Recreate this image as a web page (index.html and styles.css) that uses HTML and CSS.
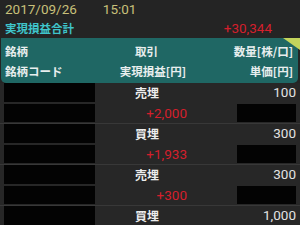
FILE: index.html
```html
<!DOCTYPE html>
<html lang="ja">
<head>
<meta charset="utf-8">
<link rel="stylesheet" href="styles.css">
</head>
<body>
<div class="top">
  <div class="dateline"><span>2017/09/26</span><span class="time">15:01</span></div>
  <div class="sumline"><span class="sumlabel">実現損益合計</span><span class="plus total">+30,344</span></div>
</div>
<div class="head">
  <div class="hrow">
    <span>銘柄</span><span class="trade">取引</span><span class="right">数量[株/口]</span>
  </div>
  <div class="hrow">
    <span>銘柄コード</span><span class="pl">実現損益[円]</span><span class="right">単価[円]</span>
  </div>
</div>
<div class="rec">
  <div class="mask"></div><span class="trade">売埋</span><span class="num right">100</span>
  <div class="mask"></div><span class="plus pl">+2,000</span><div class="mask rmask"></div>
</div>
<div class="rec">
  <div class="mask"></div><span class="trade">買埋</span><span class="num right">300</span>
  <div class="mask"></div><span class="plus pl">+1,933</span><div class="mask rmask"></div>
</div>
<div class="rec">
  <div class="mask"></div><span class="trade">売埋</span><span class="num right">300</span>
  <div class="mask"></div><span class="plus pl">+300</span><div class="mask rmask"></div>
</div>
<div class="rec">
  <div class="mask"></div><span class="trade">買埋</span><span class="num right">1,000</span>
  <div class="mask"></div><span class="plus pl"></span><div class="mask rmask"></div>
</div>
</body>
</html>
```
FILE: styles.css
```css
html, body {
  margin: 0;
  padding: 0;
}
body {
  width: 300px;
  height: 225px;
  overflow: hidden;
  background: #242424;
  font-family: "Roboto", "Noto Sans CJK JP", sans-serif;
  color: #e6e6e6;
}
.top {
  padding: 0 5px;
}
.dateline {
  display: flex;
  height: 18px;
  align-items: center;
  font-size: 13.5px;
  color: #c8c07a;
}
.time {
  margin-left: 26px;
}
.sumline {
  display: flex;
  justify-content: space-between;
  align-items: center;
  height: 20px;
  padding-right: 23px;
}
.sumlabel {
  font-family: "Noto Sans CJK JP", sans-serif;
  font-weight: bold;
  font-size: 11.5px;
  color: #3fc4cb;
}
.plus {
  color: #d41f2c;
  font-size: 13.5px;
}
.head {
  position: relative;
  margin: 0 2px 0 1px;
  padding: 3px 0 2px;
  background: #1f6764;
  border-radius: 0 0 5px 5px;
  font-family: "Noto Sans CJK JP", sans-serif;
  font-weight: bold;
  font-size: 11.5px;
  color: #e8eeee;
}
.head::after {
  content: "";
  position: absolute;
  top: 0;
  right: -2px;
  width: 17px;
  height: 12px;
  background: #c4d55c;
  clip-path: polygon(0 0, 100% 0, 100% 100%);
}
.hrow {
  display: grid;
  grid-template-columns: 90px 95px 1fr;
  height: 20px;
  align-items: center;
  padding: 0 5px 0 4px;
}
.trade {
  padding-left: 40px;
}
.pl {
  text-align: right;
  padding-right: 4px;
}
.right {
  text-align: right;
}
.rec {
  display: grid;
  grid-template-columns: 91px 95px 1fr;
  grid-template-rows: 18.7px 17.3px;
  row-gap: 2.7px;
  align-items: center;
  padding: 0 4px 1.3px;
  border-bottom: 1.3px solid #383838;
  background: #272727;
}
.rec .trade {
  font-family: "Noto Sans CJK JP", sans-serif;
  font-weight: bold;
  font-size: 12px;
  color: #ececec;
}
.rec .pl {
  padding-right: 3px;
}
.num {
  font-size: 13.5px;
  color: #e2e2e2;
  padding-right: 0;
}
.mask {
  align-self: stretch;
  background: #030303;
}
.rmask {
  width: 59px;
  justify-self: end;
}
```
